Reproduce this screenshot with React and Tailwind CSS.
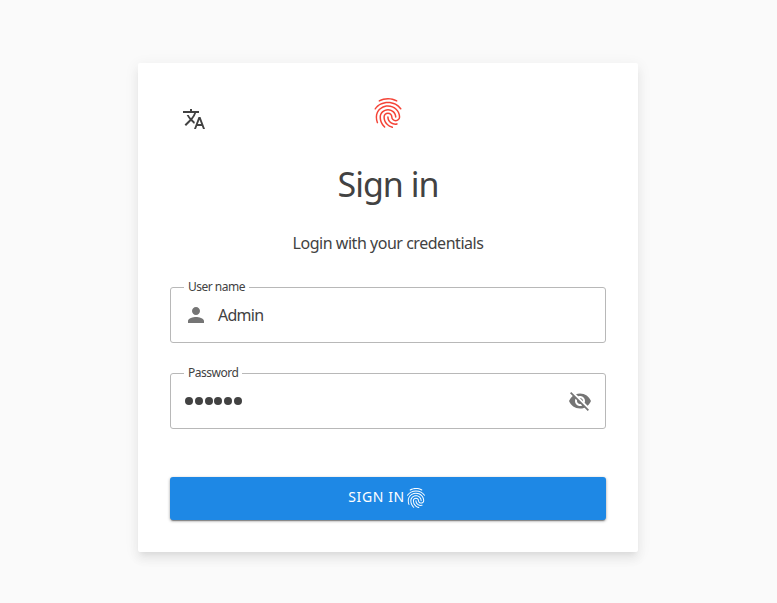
import { MdFingerprint, MdTranslate, MdPerson, MdVisibilityOff } from "react-icons/md";

function Field({ label, labelClass, children }) {
  return (
    <fieldset className="h-[62px] min-w-0 rounded-[3px] border border-[#b8b8b8] pr-[13px] pl-[13px]">
      <legend className={`h-3 px-1 text-[12px] leading-[12px] whitespace-nowrap ${labelClass}`}>{label}</legend>
      <div className="flex h-[44px] items-center">{children}</div>
    </fieldset>
  );
}

export default function App() {
  return (
    <div className="flex h-[603px] w-[777px] justify-center overflow-hidden bg-[#fafafa] pt-[63px] pr-px font-['Noto_Sans',sans-serif] text-[#424242]">
      <main className="h-[489px] w-[500px] rounded-[2px] bg-white px-8 shadow-[0_5px_5px_-3px_rgba(0,0,0,0.06),0_8px_10px_1px_rgba(0,0,0,0.04),0_3px_14px_2px_rgba(0,0,0,0.05)]">
        <header className="grid h-[91px] grid-cols-[1fr_36px_1fr] pt-8">
          <MdTranslate className="mt-3 ml-3 size-6" />
          <MdFingerprint className="size-9 text-[#f44336]" />
        </header>
        <h1 className="h-[62px] text-center text-[34px] leading-[61px] tracking-[-1px] whitespace-nowrap">Sign in</h1>
        <p className="mt-[15px] h-6 text-center text-[16px] leading-6 tracking-[-0.47px] whitespace-nowrap">Login with your credentials</p>
        <form className="mt-[26px]">
          <Field label="User name" labelClass="w-[65px] tracking-[-0.5px]">
            <MdPerson className="size-6 text-[#757575]" />
            <span className="ml-[10px] text-[16px] tracking-[-0.75px]">Admin</span>
          </Field>
          <div className="h-6" />
          <Field label="Password" labelClass="w-[58px] tracking-[-0.5px]">
            <div className="mb-px flex gap-[1.75px] pl-px" aria-label="Password">
              {Array.from({ length: 6 }, (_, i) => (
                <span key={i} className="size-2 rounded-full bg-[#424242]" />
              ))}
            </div>
            <MdVisibilityOff className="ml-auto size-6 text-[#757575]" />
          </Field>
          <button type="button" className="mt-12 flex h-[43px] w-full items-center justify-center rounded-[3px] bg-[#1e88e5] text-[14px] text-white shadow-[0_1px_3px_rgba(0,0,0,0.4),0_2px_1px_-1px_rgba(0,0,0,0.3)]">
            <span className="-mt-1 tracking-[0.6px] whitespace-nowrap">SIGN IN</span>
            <MdFingerprint className="-mt-px -ml-px size-6" />
          </button>
        </form>
      </main>
    </div>
  );
}
